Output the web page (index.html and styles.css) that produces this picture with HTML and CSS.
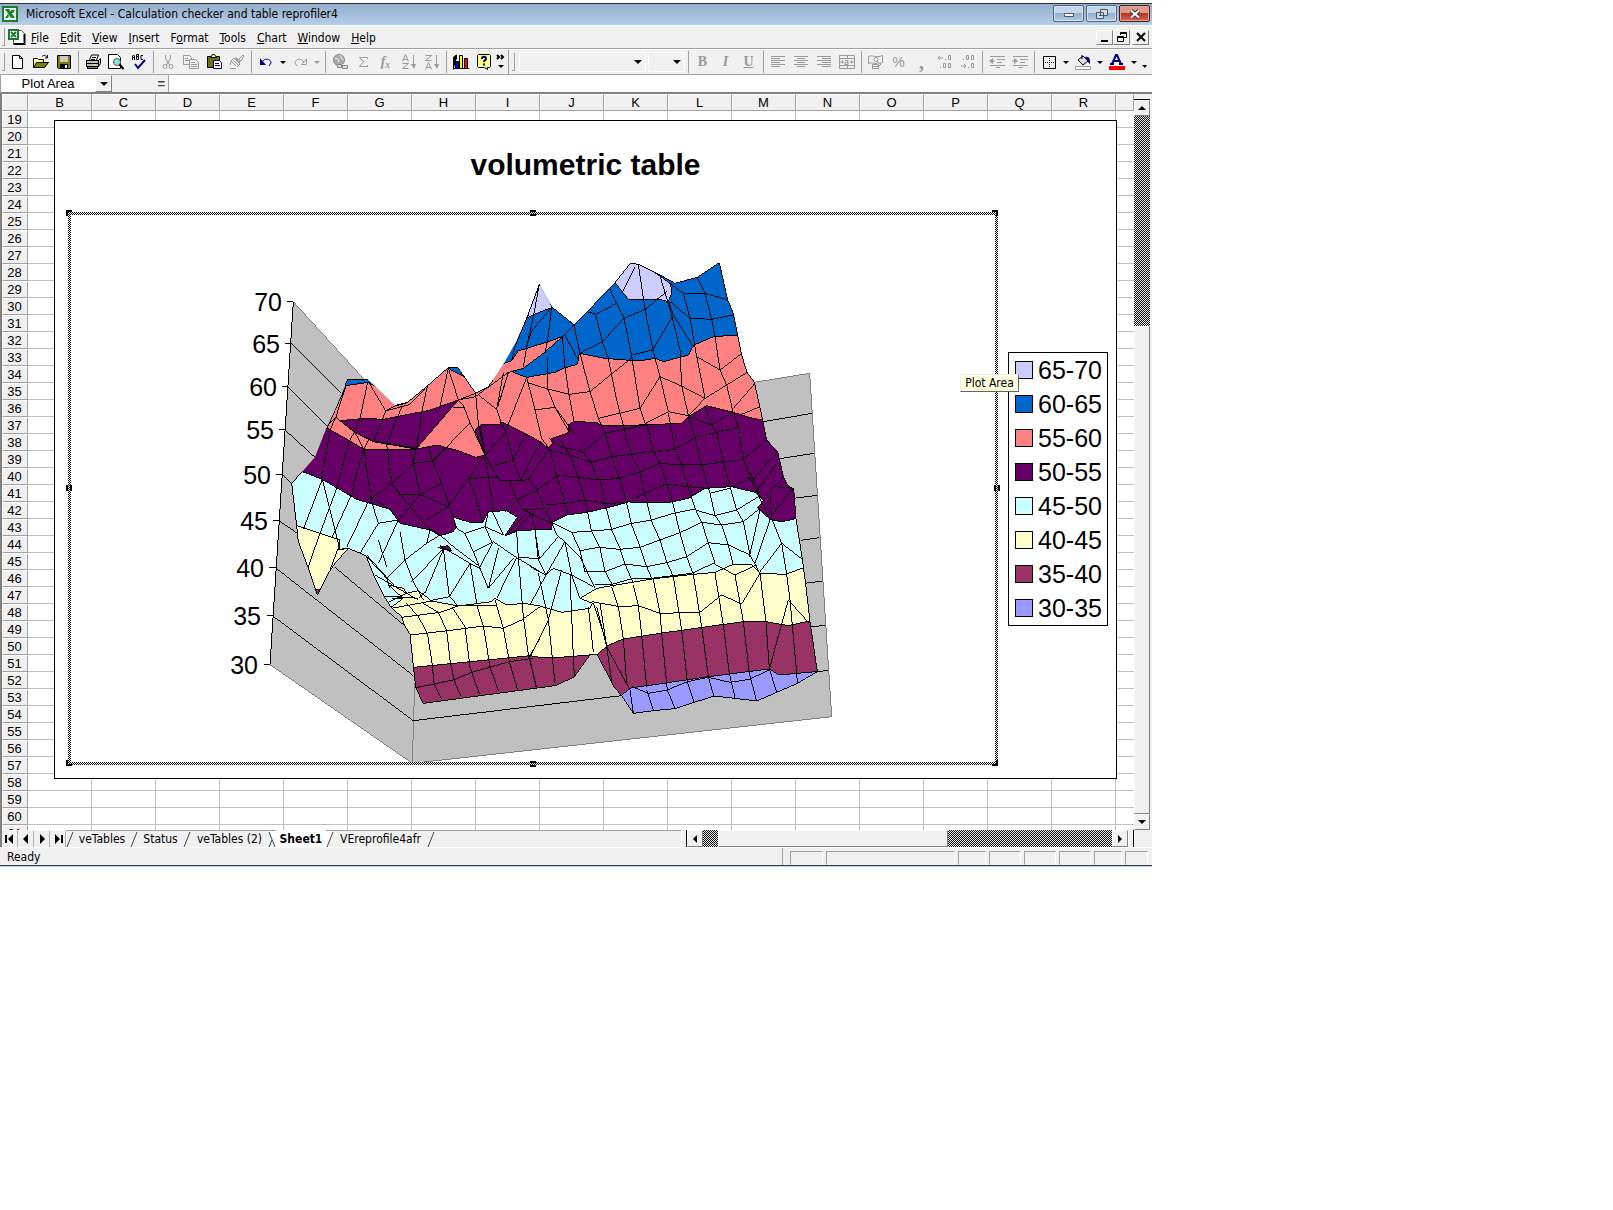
FILE: index.html
```html
<!DOCTYPE html>
<html lang="en">
<head>
<meta charset="utf-8">
<title>Microsoft Excel - Calculation checker and table reprofiler4</title>
<link rel="stylesheet" href="styles.css">
</head>
<body>
<main class="window">
  <header class="titlebar">
    <svg class="app-icon" width="16" height="16" viewBox="0 0 16 16"><path fill="#1d7a2e" d="M0 0h16v16H0z"/><path fill="#e8f4e8" d="M2 2h12v12H2z"/><path fill="#1d7a2e" d="M3 3h4l6 9H9z"/><path fill="#1d7a2e" d="M9 4h4l-2 3H9zM3 12l3-4 1 2-1 2z"/></svg>
    <h1>Microsoft Excel - Calculation checker and table reprofiler4</h1>
    <div class="window-buttons">
      <button aria-label="Minimize"><svg width="12" height="10" viewBox="0 0 12 10"><path fill="#fff" stroke="#4b5563" d="M1.500 4.500h9v3h-9z"/></svg></button>
      <button aria-label="Restore"><svg width="12" height="10" viewBox="0 0 12 10"><path fill="#cfdcea" stroke="#4b5563" d="M4.500.500h7v6h-7zM.500 3.500h7v6h-7z"/><path fill="#4b5563" d="M3 6h2v1H3z"/></svg></button>
      <button class="close" aria-label="Close"><svg width="12" height="10" viewBox="0 0 12 10"><path stroke="#4a3a40" stroke-width="4" d="M2 1.500l8 7M10 1.500l-8 7"/><path stroke="#fff" stroke-width="2" d="M2 1.500l8 7M10 1.500l-8 7"/></svg></button>
    </div>
  </header>

  <nav class="menubar">
    <span class="grip"></span>
    <svg class="doc-icon" width="18" height="16" viewBox="0 0 18 16"><path fill="#fff" stroke="#555" d="M5.500 1.500h8l3 3v11h-11z"/><path stroke="#000" stroke-width="2" fill="none" d="M16.500 5v10H6"/><path fill="#fff" stroke="#1d7a2e" stroke-width="2" d="M1 1h9v9H1z"/><path stroke="#1d7a2e" stroke-width="2" d="M3 3l5 5M8 3L3 8"/></svg>
    <a href="#"><u>F</u>ile</a><a href="#"><u>E</u>dit</a><a href="#"><u>V</u>iew</a><a href="#"><u>I</u>nsert</a><a href="#">F<u>o</u>rmat</a><a href="#"><u>T</u>ools</a><a href="#"><u>C</u>hart</a><a href="#"><u>W</u>indow</a><a href="#"><u>H</u>elp</a>
    <div class="doc-buttons">
      <button aria-label="Minimize workbook"><svg width="10" height="10" viewBox="0 0 10 10"><path d="M1 8h7v2H1z"/></svg></button>
      <button aria-label="Restore workbook"><svg width="10" height="10" viewBox="0 0 10 10"><path fill="none" stroke="#000" d="M3.500 3V.500h6v5H7M.500 4.500h6v5h-6zM3 1.500h6M1 5.500h5"/></svg></button>
      <button class="doc-close" aria-label="Close workbook"><svg width="10" height="10" viewBox="0 0 10 10"><path stroke="#000" stroke-width="2" d="M1 1l8 8M9 1L1 9"/></svg></button>
    </div>
  </nav>

  <div class="toolbars">
    <div class="toolbar standard">
      <span class="grip"></span>
      <button aria-label="New"><svg viewBox="0 0 16 16"><path fill="#fff" stroke="#000" d="M2.500 1.500h7l3 3v10h-10zM9.500 1.500v3h3"/></svg></button>
      <button aria-label="Open"><svg viewBox="0 0 16 16"><path fill="#ffffa0" stroke="#000" d="M.500 13.500v-9h4l1 1h5v3"/><path fill="#808000" stroke="#000" d="M.500 13.500l3-5h12l-4 5z"/><path fill="none" stroke="#000" d="M9 2.500c2-2 4-1 5 1M14.500 1v3H12"/></svg></button>
      <button aria-label="Save"><svg viewBox="0 0 16 16"><path fill="#808000" stroke="#000" d="M1.500 1.500h13v13h-12l-1-1z"/><path fill="#c8c8c8" d="M4 2h8v6H4z"/><path d="M4 10h8v5H4z"/><path fill="#fff" d="M9 11h2v3H9z"/></svg></button>
      <span class="sep"></span>
      <button aria-label="Print"><svg viewBox="0 0 16 16"><path fill="#fff" stroke="#000" d="M4.500 6l2-5h7l-2 5"/><path stroke="#000" d="M7 3.500h4M6 5.500h4"/><path fill="#c0c0c0" stroke="#000" d="M1.500 6.500h12v6h-12zM13.500 6.500l2-2v5l-2 3"/><path fill="#808080" stroke="#000" d="M2.500 12.500h10v2h-10z"/><path stroke="#000" d="M2 9.500h11"/><path fill="#ff0" d="M9 10h2v1H9z"/></svg></button>
      <button aria-label="Print preview"><svg viewBox="0 0 16 16"><path fill="#fff" stroke="#000" d="M.500.500h9l3 3v11H.500z"/><circle cx="9" cy="8" r="3.500" fill="#8fe0e0" stroke="#555"/><path stroke="#000" stroke-width="2" d="M11.500 10.500l4 4.500"/></svg></button>
      <button aria-label="Spelling"><svg viewBox="0 0 16 16"><path fill="none" stroke="#000" d="M1.500 6V2l1-1 1 1v4M2 3.500h1M5.500 5.500v-5h2v2h-2h2v3h-2M12 1.500h-2v4h2"/><path fill="none" stroke="#000080" stroke-width="2" d="M4 10l3 4 7-8"/></svg></button>
      <span class="sep"></span>
      <button aria-label="Cut"><svg viewBox="0 0 16 16"><g fill="none" stroke="#999"><path d="M5.500 1v3l4 7M10.500 1v3l-4 7"/><circle cx="5" cy="12.500" r="2"/><circle cx="11" cy="12.500" r="2"/></g></svg></button>
      <button aria-label="Copy"><svg viewBox="0 0 16 16"><g fill="#f0f0f0" stroke="#999"><path d="M.500 1.500h6l2 2v7h-8zM2 4.500h3M2 6.500h4"/><path d="M6.500 5.500h6l3 3v6h-9zM8 8.500h4M8 10.500h6M8 12.500h6"/></g></svg></button>
      <button aria-label="Paste"><svg viewBox="0 0 16 16"><path fill="#707010" stroke="#000" d="M1.500 2.500h12v11h-12z"/><path fill="#ffff80" stroke="#000" d="M4.500 3.500l2-3h2l2 3z"/><path fill="#fff" stroke="#000080" d="M7.500 6.500h6l2 2v6h-8zM9 9.500h4M9 11.500h5"/></svg></button>
      <button aria-label="Format painter"><svg viewBox="0 0 16 16"><path fill="none" stroke="#999" d="M10 5l4-4 1 1-3 5zM5 4l6 6M3 5l6 6M2 7l5 5M5 4L2 7l-1 4M11 10l-3 3M1 14.500h6"/><path fill="#999" d="M7 3l5 5-2 1-4-4z"/></svg></button>
      <span class="sep"></span>
      <button aria-label="Undo"><svg viewBox="0 0 16 16"><path fill="none" stroke="#000080" d="M4 8.500c2-5 9-4 9 0.500l-2 3"/><path fill="#000080" d="M2 4v7h6z"/></svg></button>
      <button class="drop" aria-label="Undo list"></button>
      <button aria-label="Redo"><svg viewBox="0 0 16 16"><path fill="none" stroke="#999" d="M12 8.500C10 3.500 3 4.500 3 9l2 3"/><path fill="none" stroke="#999" d="M14.500 5v5.500h-5z"/></svg></button>
      <button class="drop off" aria-label="Redo list"></button>
      <span class="sep"></span>
      <button aria-label="Hyperlink"><svg viewBox="0 0 16 16"><circle cx="7" cy="6" r="5.500" fill="#aaa" stroke="#888"/><path fill="none" stroke="#eee" d="M3 4l3 1 1 3M8 1l2 4 2 1"/><path fill="#ddd" stroke="#888" d="M5.500 10.500h4v3h-4zM10.500 11.500h5v3h-5z"/></svg></button>
      <button aria-label="AutoSum"><svg viewBox="0 0 16 16"><path fill="none" stroke="#999" d="M12.500 5V3.500h-8l4 4.500-4 4.500h8V11M5 4l4 4"/></svg></button>
      <button aria-label="Paste function"><span class="glyph fx">f<sub>x</sub></span></button>
      <button aria-label="Sort ascending"><svg viewBox="0 0 16 16"><path fill="none" stroke="#999" d="M1.500 7.500L4.500.500l3 7M2 5.500h5M1.500 9.500h6l-6 5h6M12.500 1v12"/><path fill="#999" d="M10 10h5l-2 5z"/></svg></button>
      <button aria-label="Sort descending"><svg viewBox="0 0 16 16"><path fill="none" stroke="#999" d="M1.500 15.500L4.500 8.500l3 7M2 13.500h5M1.500 1.500h6l-6 5h6M12.500 1v12"/><path fill="#999" d="M10 10h5l-2 5z"/></svg></button>
      <span class="sep"></span>
      <button aria-label="Chart wizard"><svg viewBox="0 0 16 16"><path stroke="#000" d="M.500 15.500V3l3-2v4M0 14.500h16"/><path fill="#00f" stroke="#000" d="M2.500 7.500h3v7h-3z"/><path fill="#ff0" stroke="#000" d="M6.500 1.500h3v13h-3z"/><path fill="red" stroke="#000" d="M11.500 4.500h3v10h-3z"/></svg></button>
      <button aria-label="Help"><svg viewBox="0 0 16 16"><path fill="#ffff80" stroke="#000" d="M2.500.500h11l1 1v11l-1 1h-2v2l-3-2h-6l-1-1v-11z"/><path fill="none" stroke="#000080" stroke-width="2" d="M6 5c0-3 4-3 4 0 0 1-2 1-2 3M8 9.500v2"/></svg></button>
      <button class="more" aria-label="More buttons"><svg viewBox="0 0 12 16"><path fill="none" stroke="#000" stroke-width="2" d="M2 1l2 2-2 2M6 1l2 2-2 2"/><path d="M3 11h6l-3 3z"/></svg></button>
    </div>
    <div class="toolbar formatting">
      <span class="grip"></span>
      <span class="combo font"><select aria-label="Font"><option></option></select></span>
      <span class="combo size"><select aria-label="Font size"><option></option></select></span>
      <span class="sep"></span>
      <button aria-label="Bold"><span class="glyph bold">B</span></button>
      <button aria-label="Italic"><span class="glyph italic">I</span></button>
      <button aria-label="Underline"><span class="glyph under">U</span></button>
      <span class="sep"></span>
      <button aria-label="Align left"><svg viewBox="0 0 16 16"><path stroke="#999" d="M1 2.500h14M1 4.500h9M1 6.500h14M1 8.500h9M1 10.500h14M1 12.500h9"/></svg></button>
      <button aria-label="Center"><svg viewBox="0 0 16 16"><path stroke="#999" d="M1 2.500h14M4 4.500h8M1 6.500h14M4 8.500h8M1 10.500h14M4 12.500h8"/></svg></button>
      <button aria-label="Align right"><svg viewBox="0 0 16 16"><path stroke="#999" d="M1 2.500h14M6 4.500h9M1 6.500h14M6 8.500h9M1 10.500h14M6 12.500h9"/></svg></button>
      <button aria-label="Merge and center"><svg viewBox="0 0 16 16"><path fill="none" stroke="#999" d="M.500 1.500h15v13H.500zM0 4.500h16M0 11.500h16M8.500 1v3M8.500 12v3M1 8h3M12 8h3M6 6.500h3v4H6v-2h3"/><path fill="#999" d="M3 6l2 2-2 2zM13 6l-2 2 2 2z"/></svg></button>
      <span class="sep"></span>
      <button aria-label="Currency"><svg viewBox="0 0 16 16"><g fill="#f0f0f0" stroke="#999"><path d="M.500 2.500c4-2 7 2 14-1v7c-7 3-10-1-14 1z"/><circle cx="8" cy="5.500" r="2"/><path d="M4.500 10.500h6v4h-6zM5 12.500h5M9 8l4 2-2 2"/></g></svg></button>
      <button aria-label="Percent"><span class="glyph pct">%</span></button>
      <button aria-label="Comma"><span class="glyph comma">,</span></button>
      <button aria-label="Increase decimal"><svg viewBox="0 0 16 16"><g fill="none" stroke="#999"><path d="M1 4h5M3 2L1 4l2 2M11.500 1.500h2v4h-2zM6.500 9.500h2v4h-2zM11.500 9.500h2v4h-2zM8.500 5v1M3.500 13v1"/></g></svg></button>
      <button aria-label="Decrease decimal"><svg viewBox="0 0 16 16"><g fill="none" stroke="#999"><path d="M1 12h5M4 10l2 2-2 2M6.500 1.500h2v4h-2zM11.500 1.500h2v4h-2zM11.500 9.500h2v4h-2zM3.500 5v1M8.500 13v1"/></g></svg></button>
      <span class="sep"></span>
      <button aria-label="Decrease indent"><svg viewBox="0 0 16 16"><path stroke="#999" d="M1 2.500h15M8 5.500h8M8 8.500h5M1 11.500h15M7 13.500h4M2 7h4"/><path fill="#999" d="M4 4v6L0 7z"/></svg></button>
      <button aria-label="Increase indent"><svg viewBox="0 0 16 16"><path stroke="#999" d="M1 2.500h15M8 5.500h8M8 8.500h5M1 11.500h15M7 13.500h4M0 7h4"/><path fill="#999" d="M2 4v6l4-3z"/></svg></button>
      <span class="sep"></span>
      <button aria-label="Borders"><svg viewBox="0 0 16 16"><path fill="none" stroke="#000" d="M2.500 2.500h12v12h-12z"/><path stroke="#000" stroke-dasharray="1 1" d="M8.500 4v10M4 8.500h10"/></svg></button>
      <button class="drop" aria-label="Border styles"></button>
      <button aria-label="Fill color"><svg viewBox="0 0 16 16"><path fill="#ddd" stroke="#000" d="M3 6l5-4 5 5-5 4zM7 5V1"/><path fill="#000080" d="M10 3c5-1 5 3 5 7l-2-2z"/><path fill="#fff" stroke="#999" d="M.500 12.500h15v3H.500z"/></svg></button>
      <button class="drop" aria-label="Fill colors"></button>
      <button aria-label="Font color"><svg viewBox="0 0 16 16"><path fill="none" stroke="#000080" stroke-width="2" d="M3 10L7 1h1l4 9M5 7h5M1 10h4M10 10h4"/><path fill="red" d="M0 12h16v4H0z"/></svg></button>
      <button class="drop" aria-label="Font colors"></button>
      <button class="more" aria-label="More formatting"><svg viewBox="0 0 12 16"><path d="M3 11h5l-2 3z"/></svg></button>
    </div>
  </div>

  <div class="formula-bar">
    <input class="name-box" aria-label="Name box" value="Plot Area">
    <button class="bevel name-drop" aria-label="Names"></button>
    <span class="equals">=</span>
    <input class="formula" aria-label="Formula">
  </div>

  <div class="workbook">
    <section class="sheet">
      <table>
        <colgroup><col class="rowcol"><col span="17" class="datacol"><col></colgroup>
        <thead><tr><th></th><th>B</th><th>C</th><th>D</th><th>E</th><th>F</th><th>G</th><th>H</th><th>I</th><th>J</th><th>K</th><th>L</th><th>M</th><th>N</th><th>O</th><th>P</th><th>Q</th><th>R</th><th></th></tr></thead>
        <tbody>
          <tr><th>19</th><td colspan="18"></td></tr><tr><th>20</th><td colspan="18"></td></tr>
          <tr><th>21</th><td colspan="18"></td></tr><tr><th>22</th><td colspan="18"></td></tr>
          <tr><th>23</th><td colspan="18"></td></tr><tr><th>24</th><td colspan="18"></td></tr>
          <tr><th>25</th><td colspan="18"></td></tr><tr><th>26</th><td colspan="18"></td></tr>
          <tr><th>27</th><td colspan="18"></td></tr><tr><th>28</th><td colspan="18"></td></tr>
          <tr><th>29</th><td colspan="18"></td></tr><tr><th>30</th><td colspan="18"></td></tr>
          <tr><th>31</th><td colspan="18"></td></tr><tr><th>32</th><td colspan="18"></td></tr>
          <tr><th>33</th><td colspan="18"></td></tr><tr><th>34</th><td colspan="18"></td></tr>
          <tr><th>35</th><td colspan="18"></td></tr><tr><th>36</th><td colspan="18"></td></tr>
          <tr><th>37</th><td colspan="18"></td></tr><tr><th>38</th><td colspan="18"></td></tr>
          <tr><th>39</th><td colspan="18"></td></tr><tr><th>40</th><td colspan="18"></td></tr>
          <tr><th>41</th><td colspan="18"></td></tr><tr><th>42</th><td colspan="18"></td></tr>
          <tr><th>43</th><td colspan="18"></td></tr><tr><th>44</th><td colspan="18"></td></tr>
          <tr><th>45</th><td colspan="18"></td></tr><tr><th>46</th><td colspan="18"></td></tr>
          <tr><th>47</th><td colspan="18"></td></tr><tr><th>48</th><td colspan="18"></td></tr>
          <tr><th>49</th><td colspan="18"></td></tr><tr><th>50</th><td colspan="18"></td></tr>
          <tr><th>51</th><td colspan="18"></td></tr><tr><th>52</th><td colspan="18"></td></tr>
          <tr><th>53</th><td colspan="18"></td></tr><tr><th>54</th><td colspan="18"></td></tr>
          <tr><th>55</th><td colspan="18"></td></tr><tr><th>56</th><td colspan="18"></td></tr>
          <tr><th>57</th><td colspan="18"></td></tr><tr><th>58</th><td colspan="18"></td></tr>
          <tr><th>59</th><td colspan="18"></td></tr><tr><th>60</th><td colspan="18"></td></tr>
          <tr><th>61</th><td colspan="18"></td></tr>
        </tbody>
      </table>

      <figure class="chart">
        <figcaption>volumetric table</figcaption>
        <svg class="plot" viewBox="55 121 1061 657">
          <defs>
            <pattern id="dither" width="2" height="2" patternUnits="userSpaceOnUse"><path fill="#fff" d="M0 0h2v2H0z"/><path d="M0 0h1v1H0zM1 1h1v1H1z"/></pattern>
            <clipPath id="surface"><path d="M155 700L187 665 225 622 262 528 285 480 315 408 323 388 383 388 465 467 503 457 562 408 625 353 653 352 707 430 745 410 760 390 790 343 828 275 860 205 898 103 937 172 1003 225 1125 98 1171 40 1195 43 1260 75 1305 100 1372 82 1438 38 1463 150 1480 190 1493 255 1505 315 1520 365 1543 397 1568 510 1580 570 1613 605 1630 680 1645 708 1661 716 1668 806 1687 928 1698 1010 1710 1115 1732 1265 1672 1300 1608 1328 1550 1353 1485 1345 1422 1338 1360 1358 1305 1376 1240 1382 1180 1390 1145 1337 1122 1310 1072 1215 1050 1215 1003 1280 950 1306 900 1313 550 1360 527 1313 510 1153 493 1125 485 1100 453 1072 432 1038 405 985 378 917 325 895 285 940 265 970 232 1035 205 955 175 875 170 828z"/></clipPath>
          </defs>
          <g transform="translate(240 250) scale(.333333)" class="lines">
            <path class="wall" d="M160 155L525 555 1543 397 1709 370 1775 1400 517 1540 90 1244z"/>
            <path class="edge" d="M517 1540L524 1300"/>
            <path d="M155 280L305 430M143 409L262 528M134 539L225 622M125 673L155 700M117 812L172 850M285 952L495 1128M105 952L520 1277M97 1097L520 1412 1145 1337M1570 515L1717 490M1618 626L1722 610M1662 745L1730 736M1682 871L1738 863M1695 1000L1746 993M1710 1131L1755 1126M1728 1266L1763 1261"/>
            <path d="M160 155L90 1244M142 155h18M135 280h18M127 409h18M117 539h18M108 673h18M99 812h18M87 952h18M80 1097h18M72 1244h18"/>
            <g clip-path="url(#surface)">
              <path fill="#0066cc" stroke="none" d="M0 0h1800v1600H0z"/>
              <path fill="#ccccff" d="M862 203L890 190 937 172 898 90zM1125 98L1172 30 1200 40 1260 78 1292 102 1295 130 1285 155 1255 147 1165 148z"/>
              <path fill="#ff8080" d="M250 560L318 407 385 397 465 440 503 440 625 355 672 380 707 420 780 345 815 332 835 303 915 278 967 260 910 310 850 355 815 365 860 382 945 367 970 355 1012 343 1018 310 1095 325 1195 333 1245 325 1270 335 1345 315 1362 285 1420 260 1493 255 1800 255V1600H0V560z"/>
              <path fill="#660066" d="M262 535L325 570 372 598H505L530 597 590 585 655 602 707 622 735 615 705 540 725 523H780L785 515 898 573 925 595 937 580 932 567 988 547 985 525 1000 515 1070 517 1085 527 1200 525 1325 520 1345 500 1400 467 1480 487 1530 503 1568 510H1800V1600H0V535zM300 512L375 505 430 508 510 492 565 482 655 450 530 595 400 573 350 550z"/>
              <path fill="#ccffff" d="M187 665L245 687 350 748 450 778 480 820 570 840 600 857 640 845 648 830 640 802 690 817 728 818 745 785 800 782 832 802 795 858 830 843 900 838 935 840 937 817 980 795 1040 787 1115 770 1165 756 1290 757 1345 745 1395 715 1475 710 1545 727 1570 752 1553 773 1590 808 1625 815 1668 806H1800V1600H0V665z"/>
              <path fill="#660066" d="M595 892L625 887 635 902 610 898z"/>
              <path fill="#ffffcc" d="M165 825L300 870 300 898 330 894 232 1040 165 870zM453 1072L490 1045 445 1005 490 1015 500 1030 535 1022 575 1053 655 1068 755 1055 765 1045 800 1065 850 1060 900 1068 965 1087 1050 1075 1057 1060 1020 1045 1070 1015 1235 987 1360 973 1425 967 1475 945 1535 943 1560 970 1635 973 1687 955H1800V1600H500z"/>
              <path fill="#993366" d="M215 1020H240L232 1045zM500 1254L520 1252 870 1217 900 1222 960 1222 1073 1213 1102 1187 1150 1167 1260 1150 1510 1115 1578 1115 1645 1127 1708 1113H1800V1600H500z"/>
              <path fill="#9999ff" d="M1145 1335L1175 1313 1250 1303 1405 1280 1588 1257 1617 1275 1740 1264V1400H1145z"/>
              <g class="mesh">
                <path d="M318 407L288 500 270 540 245 690M383 397L360 505 343 548 328 572 292 710M385 395L437 483 465 468 503 458M437 483L510 463 562 408M437 483L427 508 400 575M485 472L473 500 440 580M562 408L545 488 530 597M625 355L600 470M625 355L655 450M707 430L655 450M640 472H672L690 518 735 615M655 450L672 470M690 518L580 633M707 432L715 520 735 615M716 435L770 478M790 370L770 478 783 515M745 410L707 440 655 450M850 355L805 367 745 412M805 368L773 470M288 500L300 512 345 548 400 575 528 597M262 528L288 500M372 598L380 660 395 750M440 583L455 700M510 598L520 640 540 730M565 588L578 635 605 700M345 548L372 598 385 570M528 597L520 640 455 700 390 750M520 640L578 633 617 590M735 615L685 686M372 598L350 670 335 735"/>
                <path transform="translate(720 450)" d="M60 65L78 98 100 180 123 242M78 98L15 165M135 103L100 180 40 197M180 125L123 242M207 148L145 238M0 75L15 165 40 330M15 165L60 242H123L147 238 170 270 195 325 215 370M0 233H55M90 245L110 300 130 330M75 335L110 300 170 270 232 228M130 330L192 325M130 330L215 370M155 340L165 390M155 340L100 400M135 345L85 400"/>
                <path transform="translate(780 0)" d="M118 103L100 200 80 290 70 350M155 172L143 270 135 310M155 172L95 243 80 290M222 225L187 260 195 350 207 433 222 515M222 225L240 310 270 425 295 505 315 550M195 255L235 330M222 225L262 185 287 193 350 160M330 118L350 160 372 205 395 320 420 475 435 520M287 193L307 275 325 325 350 450 375 545M405 50L365 130M415 43L435 178 460 305 480 380M500 125L435 178 372 205 307 275 240 310M480 78L515 195 540 300 545 408 565 495M505 155L520 195 580 290M520 195L458 300 395 315M400 320L325 380 270 425 207 433 143 417 80 397M512 102L550 130 570 205 590 320 615 445M550 130H615L685 150M592 82L615 130 635 208 645 260 660 360 590 320M510 155L570 205 635 208 700 195M722 313L660 360 680 405 745 365M480 380L545 408 615 445 680 405 700 490M480 380L420 475 295 505M480 380L505 485M700 475L765 400M720 495L780 470M435 520L505 485 565 497 615 445M143 320V417L165 472M80 382L18 540M80 382L105 480 125 565 150 600M105 480L165 472 207 545M25 367L0 450M165 472L225 553M148 565L180 590 250 605 315 550 435 525M150 600L210 615 272 637 335 620 460 605 525 598 585 563 650 547 715 532M150 600L170 675M180 570L210 615 235 682M250 605L272 637 295 690M315 550L335 620 357 685M375 545L395 615 420 665M440 520L460 605 480 640M505 490L525 598 545 645M565 500L585 563 605 645M615 470L635 525 650 547 670 635M565 500L635 525 700 485 715 532 730 628M170 675L235 682 295 690 357 685 420 665 480 640 545 645 605 645 670 635 730 628 800 570M730 628L755 695 830 605M755 695L785 745M830 640L765 730"/>
                <path transform="translate(0 630)" d="M247 58L300 270M247 58L190 208M292 80L240 220 203 325M335 103L275 235M385 125L320 262M293 270L325 265M300 250L270 330M455 70L510 140 560 200 600 225M390 110L415 190 360 280M455 70L480 105 540 103 625 140M540 103L510 140 475 180 415 190M390 110L445 145M605 70L540 103M605 70L640 172M560 180L625 140 685 55 735 53M685 55L700 90 728 188M755 150L790 225M475 180L415 310M480 215L495 300 520 365M380 290L440 355 450 385M440 355L495 300 560 250 600 225M560 250L570 210M520 365L550 420M515 365L610 265 628 410M610 268L555 400M600 257L690 310 720 325M690 310L710 430M690 310L628 410 570 422M628 410L655 438M650 205L675 220 700 275 720 325 745 385M650 205L640 172M675 220L735 200 790 225M600 225L640 260 720 320M700 275L760 245 830 293 900 335M760 245L720 320M775 265L745 385M830 293L770 415M820 295L745 385M735 200L755 245M735 200L745 155M830 215L835 293 850 470M885 210L898 295 835 293M455 445L575 423M455 415H490M485 472L600 457 655 438H770M510 525L625 512 730 498 790 505 845 480 900 440M500 430L535 470 562 520 575 600 582 670 605 718M550 430L595 457 620 512 630 600 642 660 662 708M635 440L675 500 690 620 695 637 718 702M710 435L730 498 750 620 775 693M765 420L790 505 808 605 832 687M850 470L865 585 890 682M527 683L640 660 695 637 808 605 880 595M900 535L868 590M405 345L500 400M380 285L465 380 535 420M432 408L535 415 555 395M440 430L500 400M415 240L440 320"/>
                <path transform="translate(870 630)" d="M80 45L105 130 115 165M145 50L165 120 185 215 210 265 225 335 250 380M210 62L225 130 245 210 270 265 285 312 310 370M270 55L290 130 305 195 330 260 350 320 365 355M330 40L350 125 365 185 390 240 410 305 430 350M390 10L410 70 430 135 450 220 470 290 490 343M455 15L475 85 495 145 515 187 535 248 555 310M515 15L540 100 555 167 575 195 595 255 610 315M580 5L600 80 620 150 640 185 660 285 690 340M640 0L665 50 690 100M45 135L105 130 165 120 225 130 285 128 345 100 410 72 475 80 530 85M610 80L665 50M65 187L125 217 185 213 245 208 305 190 365 180 430 160 490 148 555 167 620 150 685 110M540 100L600 85M125 217L150 272 205 262 270 268 330 262 390 240 450 218 515 187 575 195 640 185 690 145M65 187L80 225 105 245 150 290 195 385M150 272L165 335 225 335 285 312 350 320 410 308 470 290 535 248 595 255 660 285M105 245L48 345 0 435M85 230L25 300M5 160L15 210 25 300 48 345M0 320L48 345 70 325 125 345 150 415M125 345L190 380M195 375L250 372 310 355 365 355 485 340 550 310 615 345 680 315M25 340L55 480 75 670M95 330L55 480 0 590M120 345L130 590 133 650M175 440L190 575M105 245L125 345M690 150L658 290M720 180L675 310M755 250L690 335M725 175L755 250 770 343 780 420 800 640 802 670M755 250L817 298M720 95L725 175M720 95L770 40M738 80L790 85 725 165M680 95L720 180M245 380L265 440 280 537 290 670M190 430L225 535M185 425L270 440 325 437 390 460 510 457 575 405 635 432 690 340M310 375L325 437 335 525 350 680M370 358L390 460 395 520 412 690M430 350L455 510 472 665M490 343L515 500 535 650 552 710M555 340L580 495 598 640 615 713M615 345L640 485 658 640 680 724M690 340L708 485 718 627 740 697M718 627L775 420 838 490M210 430L230 560 245 665M200 440L230 560 300 690 310 760M350 690L370 750M412 690L435 745M472 665L492 725M305 680L355 700 412 690 472 665 535 652 600 667 658 658 718 630M0 600L18 680"/>
              </g>
            </g>
            <path d="M315 408L323 388 383 388M465 467L503 457 562 408 625 353 653 352 707 430 745 410 760 390M815 332L825 290 860 205 898 103M937 172L1003 225 1125 98 1171 40 1195 43 1260 75 1305 100 1372 82 1438 38 1463 150 1480 190 1493 255 1505 315 1520 365 1543 397 1568 510 1580 570 1613 605 1630 680 1645 708 1661 716 1668 806 1687 928 1698 1010 1710 1115 1732 1265 1672 1300 1608 1328 1550 1353 1485 1345 1422 1338 1360 1358 1305 1376 1240 1382 1180 1390 1145 1337 1122 1310 1072 1215M1050 1215L1003 1280 950 1306 900 1313 550 1360 527 1313 510 1153 493 1125 485 1100 453 1072 432 1038 405 985 378 917 325 895 285 940 265 970 232 1035 205 955 175 875 170 828 155 700 187 665"/>
          </g>
          <g class="axis">
            <text x="282" y="311">70</text><text x="280" y="353">65</text><text x="277" y="396">60</text><text x="274" y="439">55</text><text x="271" y="484">50</text><text x="268" y="530">45</text><text x="264" y="577">40</text><text x="261" y="625">35</text><text x="258" y="674">30</text>
          </g>
          <path fill="url(#dither)" fill-rule="evenodd" d="M68 212h930v553H68zM71 215v547h924V215z"/>
          <path d="M66 210h6v2h-4v4h-2zM992 210h6v6h-2v-4h-4zM66 760h2v4h4v2h-6zM998 760v6h-6v-2h4v-4zM530 210h6v2h-6zM530 214h6v2h-6zM530 761h6v2h-6zM530 765h6v2h-6zM66 485h2v6h-2zM70 485h2v6h-2zM994 485h2v6h-2zM998 485h2v6h-2z"/>
        </svg>
        <ul class="legend">
          <li class="r65">65-70</li><li class="r60">60-65</li><li class="r55">55-60</li><li class="r50">50-55</li><li class="r45">45-50</li><li class="r40">40-45</li><li class="r35">35-40</li><li class="r30">30-35</li>
        </ul>
        <div class="tooltip" role="tooltip">Plot Area</div>
      </figure>
    </section>
    <div class="vscroll">
      <span class="split"></span>
      <button class="bevel up" aria-label="Scroll up"></button>
      <span class="track"></span>
      <span class="bevel thumb"></span>
      <button class="bevel down" aria-label="Scroll down"></button>
    </div>
  </div>

  <div class="tab-row">
    <div class="tab-nav">
      <button aria-label="First sheet"><svg viewBox="0 0 16 16"><path d="M3 4h2v8H3zM11 3v10L6 8z"/></svg></button>
      <button aria-label="Previous sheet"><svg viewBox="0 0 16 16"><path d="M10 3v10L5 8z"/></svg></button>
      <button aria-label="Next sheet"><svg viewBox="0 0 16 16"><path d="M6 3v10l5-5z"/></svg></button>
      <button aria-label="Last sheet"><svg viewBox="0 0 16 16"><path d="M5 3v10l5-5zM11 4h2v8h-2z"/></svg></button>
    </div>
    <div class="tabs">
      <svg class="slant" viewBox="0 0 8 17"><path d="M1 16L7 1"/></svg><button class="w1">veTables</button>
      <svg class="slant" viewBox="0 0 8 17"><path d="M1 16L7 1"/></svg><button class="w2">Status</button>
      <svg class="slant" viewBox="0 0 8 17"><path d="M1 16L7 1"/></svg><button class="w3">veTables (2)</button>
      <svg class="slant" viewBox="0 0 8 17"><path class="paper" d="M2 0h6v16H7z"/><path d="M1 1L7 16M1 16L4 9"/></svg><button class="w4 active">Sheet1</button>
      <svg class="slant" viewBox="0 0 8 17"><path class="paper" d="M0 0h7L1 16H0z"/><path d="M1 16L7 1"/></svg><button class="w5">VEreprofile4afr</button>
      <svg class="slant" viewBox="0 0 8 17"><path d="M1 16L7 1"/></svg>
    </div>
    <div class="hscroll">
      <span class="hsplit"></span>
      <button class="bevel left" aria-label="Scroll left"></button>
      <span class="track gap"></span>
      <span class="bevel thumb"></span>
      <span class="track"></span>
      <button class="bevel right" aria-label="Scroll right"></button>
      <span class="hsplit"></span>
      <span class="corner"></span>
    </div>
  </div>

  <footer class="status">
    <span class="message">Ready</span>
    <span class="cell c1"></span><span class="cell c2"></span><span class="cell c3"></span><span class="cell c4"></span><span class="cell c4"></span><span class="cell c4"></span><span class="cell c3"></span><span class="cell c5"></span>
  </footer>
</main>
</body>
</html>
```
FILE: styles.css
```css
* { box-sizing: border-box; }
body {
  margin: 0;
  background: #fff;
  color: #000;
  font: 12px/16px "DejaVu Sans Condensed", Roboto, sans-serif;
}
button { margin: 0; padding: 0; border: 0; background: none; color: inherit; font: inherit; }
input, select { margin: 0; padding: 0; border: 0; border-radius: 0; font: inherit; min-width: 0; }
svg { display: block; }

.window {
  max-width: 1152px;
  margin-top: 3px;
  background: #f0f0f0;
  border-bottom: 1px solid #bcd0e6;
}

/* Title bar */
.titlebar {
  display: flex;
  align-items: center;
  height: 22px;
  padding: 0 2px 2px;
  border-top: 1px solid #333;
  background: linear-gradient(#93aecb, #b5cde8);
}
.titlebar h1 { flex: 1; margin: 0 0 0 8px; font-size: 12px; font-weight: normal; }
.window-buttons { display: flex; gap: 2px; }
.window-buttons button {
  display: grid;
  place-items: center;
  width: 31px;
  height: 17px;
  border: 1px solid #4f6880;
  border-radius: 2px;
  background: linear-gradient(#c3d5e8 45%, #93afcc 50%, #b3cbe2);
  box-shadow: inset 0 0 0 1px #d5e2f0;
}
.window-buttons .close { border-color: #4a1a1a; background: linear-gradient(#dc9a8c 45%, #b9321c 50%, #cf6a50); box-shadow: inset 0 0 0 1px #e4a79b; }

/* Menu bar */
.menubar {
  display: flex;
  align-items: center;
  height: 24px;
  padding: 0 3px 0 2px;
  border-top: 1px solid #fff;
  border-bottom: 1px solid #a0a0a0;
}
.menubar a { margin-left: 11px; padding-top: 2px; color: #000; text-decoration: none; }
.grip { width: 3px; height: 18px; border-right: 1px solid #a0a0a0; border-bottom: 1px solid #a0a0a0; }
.doc-icon { margin: 0 -6px 0 3px; }
.doc-buttons { display: flex; margin-left: auto; }
.doc-buttons button, .bevel {
  border: 1px solid;
  border-color: #fff #808080 #808080 #fff;
  background: #f0f0f0;
}
.doc-buttons button { display: grid; place-items: center; width: 17px; height: 15px; }
.doc-buttons .doc-close { margin-left: 2px; }

/* Toolbars */
.toolbars { display: flex; height: 26px; border-bottom: 1px solid #a0a0a0; }
.toolbar { display: flex; align-items: center; padding-left: 2px; border-top: 1px solid #fff; }
.standard { width: 509px; border-right: 1px solid #a0a0a0; }
.formatting { flex: 1; }
.toolbar .grip { margin-right: 1px; }
.formatting .grip { margin: 0 4px 0 1px; }
.toolbar button { display: grid; place-items: center; flex: none; width: 23px; height: 22px; }
.toolbar button svg { width: 16px; height: 16px; }
.sep { flex: none; width: 6px; height: 22px; background: linear-gradient(#a0a0a0, #a0a0a0) 3px 0 / 1px 100% no-repeat; }
.toolbar .drop { width: 11px; }
.drop::after, .combo::after, .name-drop::after { content: ""; border: 3px solid transparent; border-top-color: #000; border-bottom: 0; }
.combo::after, .name-drop::after { border-width: 4px; border-bottom: 0; }
.off::after { border-top-color: #999; }
.toolbar .more { width: 12px; }
.toolbar .more svg { width: 12px; }
.combo { display: flex; align-items: center; height: 20px; padding-right: 3px; border: 1px solid #fff; }
.combo select { flex: 1; height: 16px; appearance: none; background: none; }
.combo.font { width: 127px; margin-right: 2px; }
.combo.size { width: 37px; }
.glyph { color: #999; font: bold 14px/16px "Liberation Serif", serif; }
.glyph.italic { font-style: italic; }
.glyph.under { text-decoration: underline; }
.glyph.fx { font-style: italic; }
.glyph sub { font-size: 10px; line-height: 8px; vertical-align: -2px; }
.glyph.pct { font: 14px/16px "Liberation Sans", sans-serif; }
.glyph.comma { font-size: 20px; }

/* Name box and formula */
.formula-bar {
  display: flex;
  height: 19px;
  border-left: 1px solid #a0a0a0;
  border-bottom: 2px solid #808080;
  font: 13px/17px "Liberation Sans", Arial, sans-serif;
}
.name-box { width: 94px; text-align: center; background: #fff; }
.name-drop { display: grid; place-items: center; width: 17px; }
.equals { width: 57px; padding-right: 3px; border-right: 1px solid #a0a0a0; text-align: right; color: #444; font-weight: bold; }
.formula { flex: 1; background: #fff; }

/* Sheet */
.workbook { display: flex; padding-right: 2px; border-left: 2px solid #808080; }
.sheet { position: relative; flex: 1; min-width: 0; height: 736px; overflow: hidden; background: #fff; }
.sheet table { width: 100%; table-layout: fixed; border-collapse: separate; border-spacing: 0; font: 13px/15px "Liberation Sans", Arial, sans-serif; }
.rowcol { width: 26px; }
.datacol { width: 64px; }
.sheet th {
  height: 17px;
  padding: 0 1px 0 0;
  border: 1px solid;
  border-color: #fff #a0a0a0 #a0a0a0 #fff;
  background: #f0f0f0;
  font-weight: normal;
  text-align: center;
}
.sheet td {
  padding: 0;
  border-bottom: 1px solid #c0c0c0;
  background: repeating-linear-gradient(to right, transparent 0 63px, #c0c0c0 63px 64px);
}

/* Chart object floating over the cells */
.chart { position: absolute; left: 52px; top: 26px; width: 1063px; height: 659px; margin: 0; border: 1px solid #000; background: #fff; font-family: "Liberation Sans", Arial, sans-serif; }
.chart figcaption { padding-top: 27px; text-align: center; font-size: 30px; line-height: 34px; font-weight: bold; }
.plot { position: absolute; inset: 0; width: 1061px; height: 657px; shape-rendering: crispEdges; }
.lines { fill: none; stroke: #000; stroke-width: 3px; }
.lines .wall { fill: #c0c0c0; stroke: #808080; }
.lines .edge { stroke: #808080; }
.axis { font-size: 25px; text-anchor: end; }
.legend { position: absolute; left: 953px; top: 231px; width: 100px; margin: 0; padding: 0 0 0 6px; border: 1px solid #000; background: #fff; list-style: none; font-size: 25px; line-height: 34px; }
.legend li { display: flex; align-items: center; height: 34px; }
.legend li::before { content: ""; width: 16px; height: 16px; margin-right: 5px; border: 1px solid #000; }
.legend .r65::before { background: #ccccff; }
.legend .r60::before { background: #0066cc; }
.legend .r55::before { background: #ff8080; }
.legend .r50::before { background: #660066; }
.legend .r45::before { background: #ccffff; }
.legend .r40::before { background: #ffffcc; }
.legend .r35::before { background: #993366; }
.legend .r30::before { background: #9999ff; }
.tooltip { position: absolute; left: 905px; top: 253px; width: 59px; height: 18px; border: 1px solid; border-color: #eee #646464 #646464 #eee; background: #ffffe1; text-align: center; font: 12px/16px "DejaVu Sans Condensed", Roboto, sans-serif; white-space: nowrap; }

/* Scroll bars */
.track { background: repeating-conic-gradient(#111 0 25%, #e8e8e8 0 50%) 0 0 / 2px 2px; }
.vscroll { display: flex; flex-direction: column; width: 16px; }
.vscroll .split { height: 6px; border-bottom: 1px solid #000; }
.vscroll .track { height: 210px; }
.vscroll .thumb { flex: 1; }
.up, .down, .left, .right { display: grid; place-items: center; width: 16px; height: 16px; }
.up::after, .down::after, .left::after, .right::after { content: ""; border: 4px solid transparent; }
.up::after { border-bottom-color: #000; border-top: 0; }
.down::after { border-top-color: #000; border-bottom: 0; }
.left::after { border-right-color: #000; border-left: 0; }
.right::after { border-left-color: #000; border-right: 0; }
.hscroll { display: flex; width: 469px; margin-left: auto; }
.hscroll .bevel { height: 17px; }
.hscroll .track { flex: 1; }
.hscroll .gap { flex: none; width: 15px; }
.hscroll .thumb { width: 230px; }
.hsplit { width: 6px; border-left: 1px solid #fff; border-right: 1px solid #000; }
.corner { width: 16px; }

/* Sheet tabs */
.tab-row { display: flex; height: 17px; padding-right: 2px; border-left: 2px solid #808080; }
.tab-nav { display: flex; }
.tab-nav button { width: 16px; border-right: 1px solid #b0b0b0; border-top: 1px solid #fff; }
.tab-nav svg { width: 16px; height: 16px; }
.tabs { display: flex; flex: 1; border-top: 1px solid #a0a0a0; }
.tabs button { height: 16px; text-align: center; white-space: nowrap; }
.tabs .active { margin-top: -1px; height: 17px; background: #fff; font-weight: bold; }
.slant { flex: none; width: 8px; height: 17px; fill: none; stroke: #444; }
.slant .paper { fill: #fff; stroke: none; }
.w1 { width: 56px; }
.w2 { width: 45px; }
.w3 { width: 77px; }
.w4 { width: 50px; }
.w5 { width: 93px; }

/* Status bar */
.status { display: flex; align-items: flex-end; gap: 3px; height: 19px; padding-right: 4px; border-top: 1px solid #fff; border-bottom: 1px solid #333d4d; }
.message { flex: 1; height: 17px; margin-right: 4px; padding: 2px 0 0 7px; border-right: 1px solid #a0a0a0; line-height: 15px; }
.cell { height: 14px; border: 1px solid; border-color: #a0a0a0 #fff transparent #a0a0a0; }
.c1 { width: 33px; }
.c2 { width: 129px; }
.c3 { width: 28px; }
.c4 { width: 32px; }
.c5 { width: 23px; }
```
